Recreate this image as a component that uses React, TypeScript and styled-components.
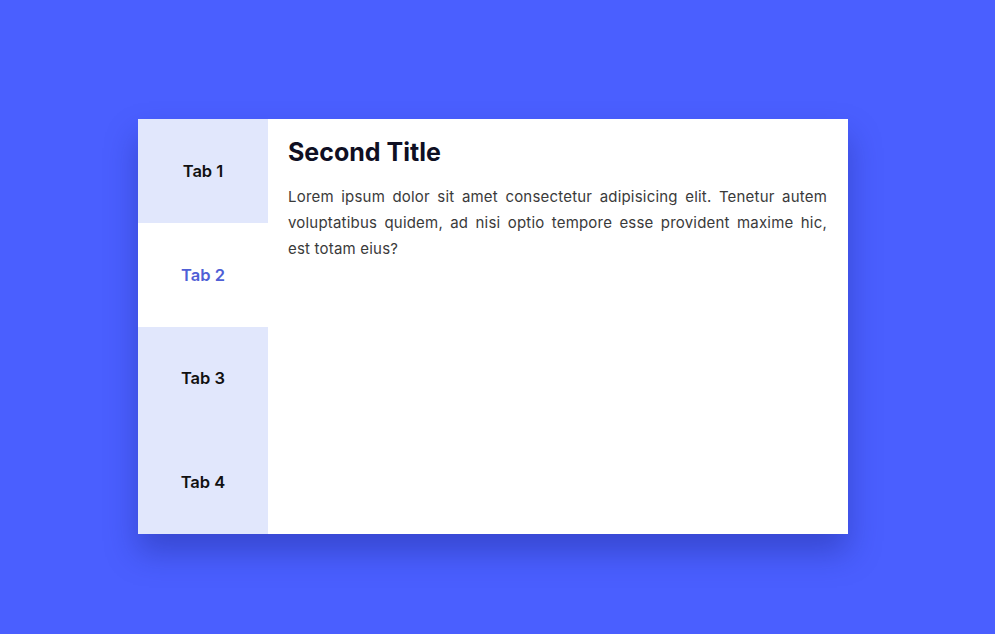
import React, { useState } from "react";
import styled, { createGlobalStyle } from "styled-components";

const Global = createGlobalStyle`
  html, body { margin: 0; padding: 0; }
  body {
    background: #4a5fff;
    font-family: "Poppins", "Inter", "Noto Sans", sans-serif;
  }
`;

const Page = styled.div`
  width: 995px;
  height: 634px;
  box-sizing: border-box;
  padding: 119px 0 0 138px;
  background: #4a5fff;
`;

const Card = styled.div`
  display: flex;
  width: 710px;
  height: 415px;
  background: #ffffff;
  box-shadow: 0 18px 30px rgba(20, 30, 120, 0.35);
`;

const TabList = styled.div`
  display: flex;
  flex-direction: column;
  width: 130px;
  flex-shrink: 0;
`;

const TabButton = styled.button<{ $active: boolean }>`
  flex: 1;
  border: none;
  margin: 0;
  padding: 0;
  cursor: pointer;
  background: ${(p) => (p.$active ? "#ffffff" : "#e1e7fc")};
  color: ${(p) => (p.$active ? "#4f5fd6" : "#111111")};
  font-family: "Inter", "Noto Sans", sans-serif;
  font-weight: 600;
  font-size: 16.5px;
`;

const Content = styled.div`
  flex: 1;
  padding: 16px 21px 0 20px;
`;

const Title = styled.h2`
  margin: 0 0 15px;
  font-family: "Inter", "Noto Sans", sans-serif;
  font-weight: 700;
  font-size: 25px;
  line-height: 34px;
  color: #0f0f23;
`;

const Body = styled.p`
  margin: 0;
  font-family: "Inter", "Noto Sans", sans-serif;
  font-size: 15px;
  line-height: 26px;
  text-align: justify;
  color: #3a3a3a;
  letter-spacing: 0.2px;
`;

const tabs = [
  { label: "Tab 1", title: "First Title" },
  { label: "Tab 2", title: "Second Title" },
  { label: "Tab 3", title: "Third Title" },
  { label: "Tab 4", title: "Fourth Title" },
];

export default function App() {
  const [active, setActive] = useState(1);
  return (
    <>
      <Global />
      <Page>
        <Card>
          <TabList>
            {tabs.map((t, i) => (
              <TabButton key={t.label} $active={i === active} onClick={() => setActive(i)}>
                {t.label}
              </TabButton>
            ))}
          </TabList>
          <Content>
            <Title>{tabs[active].title}</Title>
            <Body>
              Lorem ipsum dolor sit amet consectetur adipisicing elit. Tenetur autem
              voluptatibus quidem, ad nisi optio tempore esse provident maxime hic, est
              totam eius?
            </Body>
          </Content>
        </Card>
      </Page>
    </>
  );
}
